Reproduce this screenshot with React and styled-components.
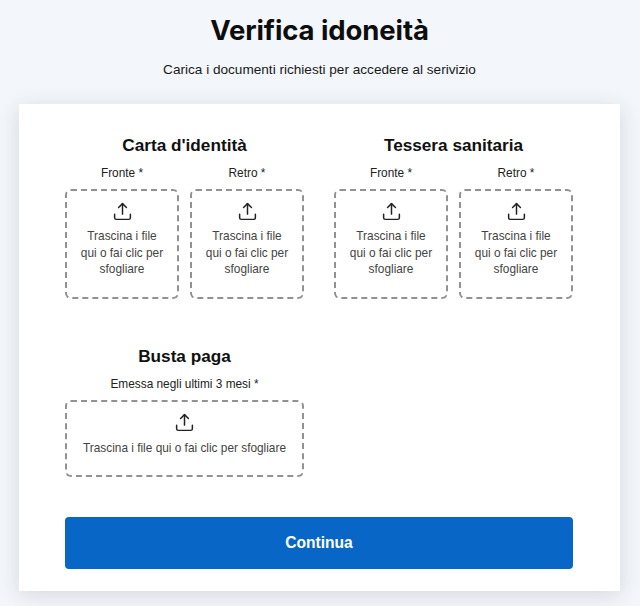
import React from "react"
import styled, { createGlobalStyle } from 'styled-components'

const GlobalStyle = createGlobalStyle`
    html, body {
        margin: 0;
        padding: 0;
        background: #f3f6fa;
    }
    body {
        font-family: "Liberation Sans", Arial, sans-serif;
        color: #111;
    }
`
const Page = styled.div`
    width: 640px;
    height: 606px;
    overflow: hidden;
    box-sizing: border-box;
    padding: 0 20px 0 19px;
    background: #f3f6fa;
`
const Title = styled.h1`
    margin: 0;
    padding-top: 12px;
    font-family: "Inter", "Liberation Sans", sans-serif;
    font-size: 27.5px;
    line-height: 36px;
    font-weight: 700;
    letter-spacing: -0.1px;
    text-align: center;
    color: #0d0d0d;
`
const Subtitle = styled.p`
    margin: 14px 0 0;
    font-size: 13.6px;
    line-height: 16px;
    text-align: center;
    color: #1a1a1a;
`
const Card = styled.div`
    margin-top: 26px;
    box-sizing: border-box;
    height: 487px;
    padding: 29px 47px 22px 46px;
    background: #fff;
    box-shadow: 0 4px 20px rgba(40, 60, 90, 0.15);
`
const Grid = styled.div`
    display: grid;
    grid-template-columns: 239px 239px;
    column-gap: 30px;
    row-gap: 45px;
`
const Section = styled.section`
    min-width: 0;
`
const SectionTitle = styled.h2`
    margin: 0;
    font-size: 17.2px;
    line-height: 24px;
    font-weight: 700;
    text-align: center;
    color: #111;
`
const Fields = styled.div`
    display: grid;
    grid-template-columns: ${props => props.single ? '1fr' : '114px 114px'};
    column-gap: 11px;
    margin-top: 9px;
`
const Label = styled.div`
    font-size: 11.85px;
    line-height: 14px;
    text-align: center;
    color: #222;
    margin-bottom: 9px;
`
const Drop = styled.div`
    box-sizing: border-box;
    height: ${props => props.single ? '77px' : '110px'};
    padding: ${props => props.single ? '10px 8px 0' : '10px 12px 0'};
    border: 2px dashed #929292;
    border-radius: 6px;
    display: flex;
    flex-direction: column;
    align-items: center;
    text-align: center;
`
const DropText = styled.div`
    margin-top: ${props => props.single ? '7px' : '6px'};
    font-size: 11.85px;
    line-height: 16.5px;
    color: #444;
`
const Button = styled.button`
    display: block;
    width: 100%;
    height: 52px;
    margin-top: 40px;
    border: 0;
    border-radius: 4px;
    background: #0866c6;
    color: #fff;
    font-family: "Liberation Sans", Arial, sans-serif;
    font-size: 15.6px;
    font-weight: 700;
`

const UploadIcon = () => (
    <svg width="21" height="21" viewBox="0 0 24 24" fill="none" stroke="#222" strokeWidth="1.7" strokeLinecap="round" strokeLinejoin="round">
        <path d="M12 3v12" />
        <path d="M7.5 7.5L12 3l4.5 4.5" />
        <path d="M3 15v4a2 2 0 0 0 2 2h14a2 2 0 0 0 2-2v-4" />
    </svg>
)

const Field = props => (
    <div>
        <Label>{props.label}</Label>
        <Drop single={props.single}>
            <UploadIcon />
            <DropText single={props.single}>Trascina i file qui o fai clic per sfogliare</DropText>
        </Drop>
    </div>
)

export default function App() {
    return (
        <Page>
            <GlobalStyle />
            <Title>Verifica idoneità</Title>
            <Subtitle>Carica i documenti richiesti per accedere al serivizio</Subtitle>
            <Card>
                <Grid>
                    <Section>
                        <SectionTitle>Carta d'identità</SectionTitle>
                        <Fields>
                            <Field label="Fronte *" />
                            <Field label="Retro *" />
                        </Fields>
                    </Section>
                    <Section>
                        <SectionTitle>Tessera sanitaria</SectionTitle>
                        <Fields>
                            <Field label="Fronte *" />
                            <Field label="Retro *" />
                        </Fields>
                    </Section>
                    <Section>
                        <SectionTitle>Busta paga</SectionTitle>
                        <Fields single>
                            <Field single label="Emessa negli ultimi 3 mesi *" />
                        </Fields>
                    </Section>
                </Grid>
                <Button>Continua</Button>
            </Card>
        </Page>
    )
}
